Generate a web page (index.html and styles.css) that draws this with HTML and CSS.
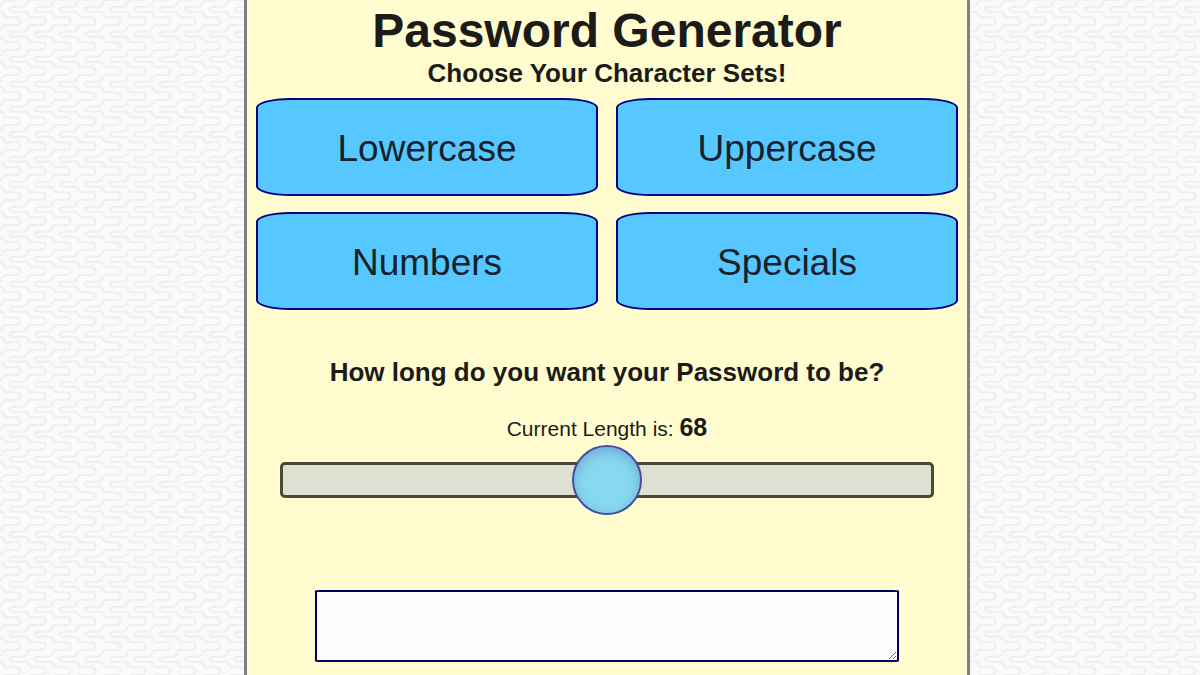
FILE: index.html
```html
<!DOCTYPE html>
<html lang="en">
<head>
<meta charset="utf-8">
<title>Password Generator</title>
<link rel="stylesheet" href="styles.css">
</head>
<body>
<main class="panel">
  <h1 class="title">Password Generator</h1>
  <h2 class="subtitle">Choose Your Character Sets!</h2>
  <div class="sets">
    <button class="set" type="button">Lowercase</button>
    <button class="set" type="button">Uppercase</button>
    <button class="set" type="button">Numbers</button>
    <button class="set" type="button">Specials</button>
  </div>
  <h2 class="question">How long do you want your Password to be?</h2>
  <label class="length" for="length">Current Length is: <strong class="length-value">68</strong></label>
  <input class="slider" id="length" type="range" min="8" max="128" value="68">
  <textarea class="output" aria-label="Generated password"></textarea>
</main>
</body>
</html>
```
FILE: styles.css
```css
* {
  box-sizing: border-box;
}

body {
  margin: 0;
  padding-left: 14px;
  min-height: 100vh;
  display: flex;
  justify-content: center;
  font-family: Arial, "Liberation Sans", sans-serif;
  color: #1c1b18;
  background-color: #fafafa;
  background-image: url("data:image/svg+xml,%3Csvg xmlns='http://www.w3.org/2000/svg' xmlns:xlink='http://www.w3.org/1999/xlink' width='25' height='25' viewBox='0 0 75 75'%3E%3Cdefs%3E%3Cpath id='w' d='M70 20H42Q30 20 30 28Q30 35 38 35H75Q82 35 85 43Q88 52 97 52H122Q136 52 136 64Q136 75 124 75H92Q86 75 82 84Q77 95 70 95'/%3E%3C/defs%3E%3Cg fill='none' stroke='%23efefef' stroke-width='6'%3E%3Cuse xlink:href='%23w'/%3E%3Cuse xlink:href='%23w' x='-75'/%3E%3Cuse xlink:href='%23w' y='-75'/%3E%3Cuse xlink:href='%23w' x='-75' y='-75'/%3E%3C/g%3E%3C/svg%3E");
}

.panel {
  width: 726px;
  max-width: 100%;
  padding: 3px 9px 13px;
  display: flex;
  flex-direction: column;
  align-items: center;
  text-align: center;
  background: #fffcd0;
  border: 3px solid #808080;
  border-top: 0;
  border-bottom: 0;
}

.title,
.subtitle,
.question {
  margin: 0;
}

.title {
  font-size: 48px;
  line-height: 56px;
}

.subtitle,
.question {
  font-size: 26px;
  line-height: 28px;
}

.sets {
  width: 100%;
  margin-top: 11px;
  display: grid;
  grid-template-columns: 1fr 1fr;
  gap: 16px 18px;
}

.set {
  height: 98px;
  padding: 4px 6px 0;
  font-family: inherit;
  font-size: 37px;
  color: #15222b;
  background: #57c8ff;
  border: 2px solid #000080;
  border-radius: 10%;
}

.question {
  margin-top: 48px;
}

.length {
  margin-top: 26px;
  font-size: 21px;
  line-height: 30px;
}

.length-value {
  font-size: 25px;
}

.slider {
  appearance: none;
  width: calc(100% - 48px);
  height: 36px;
  margin: 18px 0 0;
  background: #dfdfd3;
  border: 3px solid #4b4a35;
  border-radius: 5px;
}

.slider::-webkit-slider-thumb {
  appearance: none;
  width: 70px;
  height: 70px;
  border: 2px solid #454d9c;
  border-radius: 50%;
  background: #87d8f0;
  box-shadow: inset 0 4px 12px #6fa9d4;
}

.output {
  width: calc(100% - 118px);
  height: 72px;
  margin-top: 92px;
  background: #fdfeff;
  border: 2px solid #00005c;
  border-radius: 1%;
}
```
